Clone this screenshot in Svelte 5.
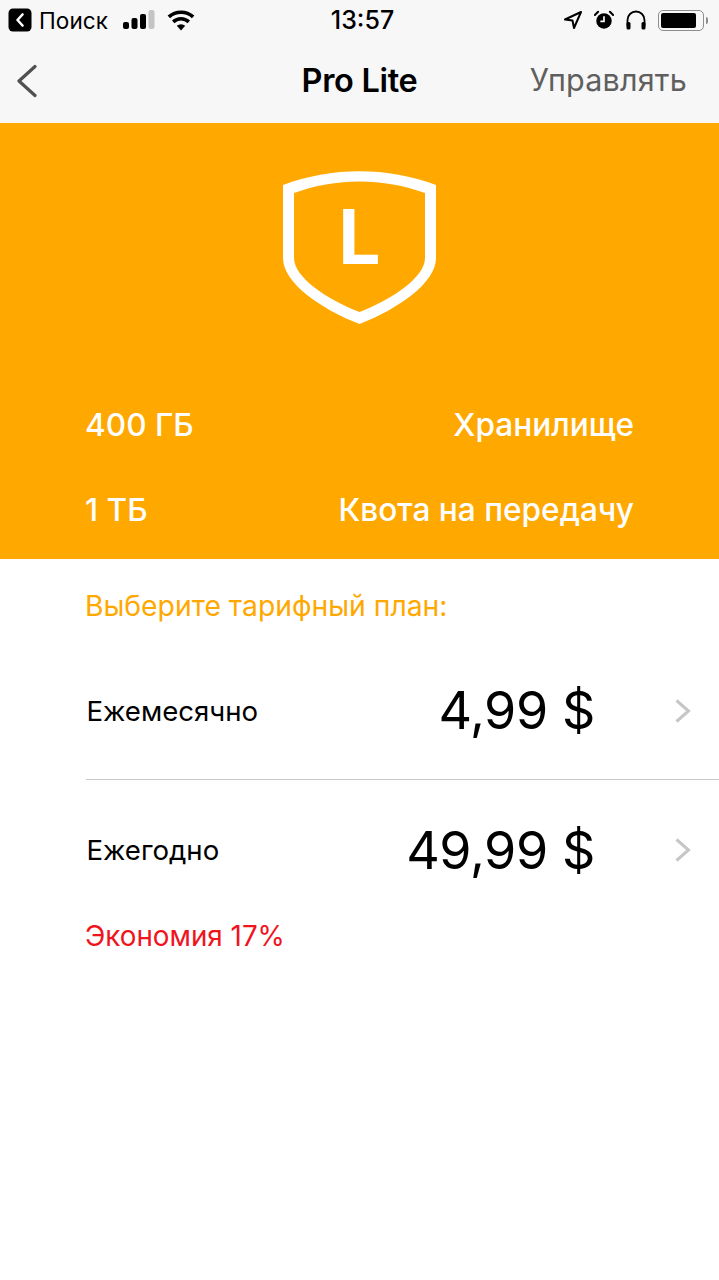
<script>
  const plans = [
    { name: 'Ежемесячно', price: '4,99 $' },
    { name: 'Ежегодно', price: '49,99 $' }
  ];
</script>

<div class="page">
  <header class="top">
    <div class="status">
      <div class="status-left">
        <span class="back-badge">
          <svg width="24" height="24" viewBox="0 0 24 24"><rect width="23" height="23" x="0.5" y="0.5" rx="4.5" fill="#000"/><path d="M14.5 6.5 9.5 12l5 5.5" fill="none" stroke="#fff" stroke-width="2.6" stroke-linecap="round" stroke-linejoin="round"/></svg>
        </span>
        <span class="search">Поиск</span>
        <svg class="signal" width="32" height="20" viewBox="0 0 32 20"><rect x="0" y="12" width="6" height="7" rx="2"/><rect x="8.500" y="8" width="6" height="11" rx="2"/><rect x="17" y="4" width="6" height="15" rx="2"/><rect x="25.500" y="0" width="6" height="19" rx="2" fill="#c4c4c4"/></svg>
        <svg class="wifi" width="28" height="21" viewBox="0 0 28 21"><path d="M14 20.500 9.800 15.800a6.200 6.200 0 0 1 8.400 0z"/><path d="M7.400 13.200 5 10.500a13.200 13.200 0 0 1 18 0l-2.400 2.700a9.700 9.700 0 0 0-13.200 0z"/><path d="M3.100 8.300 0.600 5.600a19.800 19.800 0 0 1 26.800 0l-2.500 2.700a16.200 16.200 0 0 0-21.800 0z"/></svg>
      </div>
      <div class="clock">13:57</div>
      <div class="status-right">
        <svg width="20" height="20" viewBox="0 0 20 20"><path d="M18 2 2 9.500l7.500 1 1.500 7.500z" fill="none" stroke="#000" stroke-width="2" stroke-linejoin="round"/></svg>
        <svg class="alarm" width="20" height="20" viewBox="0 0 22 22"><circle cx="11" cy="12" r="8.500"/><path d="M11 7v5.500H7" fill="none" stroke="#fff" stroke-width="1.800"/><path d="M1 5.500 4.500 2M21 5.500 17.500 2" stroke="#000" stroke-width="2.200" stroke-linecap="round"/></svg>
        <svg class="phones" width="22" height="22" viewBox="0 0 22 22"><path d="M2.500 17v-6a8.500 8.500 0 0 1 17 0v6" fill="none" stroke="#000" stroke-width="1.800"/><rect x="1.500" y="13" width="4" height="7.500" rx="1.500"/><rect x="16.500" y="13" width="4" height="7.500" rx="1.500"/></svg>
        <div class="battery"><div class="cell"></div></div>
        <div class="nub"></div>
      </div>
    </div>
    <nav class="nav">
      <svg class="chev" width="24" height="36" viewBox="0 0 24 36"><path d="M22 4.500 6 19l16 14.500" fill="none" stroke="#505050" stroke-width="3.200" stroke-linecap="round" stroke-linejoin="round"/></svg>
      <h1>Pro Lite</h1>
      <span class="manage">Управлять</span>
    </nav>
  </header>

  <section class="hero">
    <svg class="shield" width="153" height="153" viewBox="0 0 153 153">
      <path fill-rule="evenodd" fill="#fff" d="M0 14C48 -4.500 105 -4.500 153 14V87C153 112 115 138 76.500 153C38 138 0 112 0 87ZM11 22C52 6.500 101 6.500 142 22V87C142 106 110 128 76.500 141C43 128 11 106 11 87Z"/>
    </svg>
    <span class="letter">L</span>
    <div class="row first"><span>400 ГБ</span><span>Хранилище</span></div>
    <div class="row"><span>1 ТБ</span><span>Квота на передачу</span></div>
  </section>

  <main class="body">
    <p class="choose">Выберите тарифный план:</p>
    <ul class="plans">
      {#each plans as plan}
        <li class="plan">
          <span class="name">{plan.name}</span>
          <span class="price">{plan.price}</span>
          <svg class="arrow" width="18" height="26" viewBox="0 0 18 26"><path d="M2.500 2.500 14.500 13 2.500 23.500" fill="none" stroke="#c6c6c6" stroke-width="3"/></svg>
        </li>
      {/each}
    </ul>
    <p class="save">Экономия 17%</p>
  </main>
</div>

<style>
  :global(body) {
    margin: 0;
    background: #fff;
  }
  .page {
    width: 719px;
    height: 1280px;
    overflow: hidden;
    font-family: Inter, "Noto Sans", sans-serif;
    color: #000;
  }
  .top {
    background: #f7f7f7;
    height: 123px;
  }
  .status {
    height: 40px;
    display: grid;
    grid-template-columns: 1fr auto 1fr;
    align-items: center;
  }
  .status-left {
    display: flex;
    align-items: center;
    padding-left: 8px;
  }
  .back-badge {
    display: flex;
    width: 24px;
    height: 24px;
  }
  .search {
    font-size: 22.500px;
    margin-left: 7px;
    letter-spacing: 0.1px;
  }
  .signal {
    margin-left: 15px;
  }
  .wifi {
    margin-left: 12px;
  }
  .clock {
    font-size: 25px;
    font-weight: 500;
    padding-left: 6px;
  }
  .status-right {
    display: flex;
    align-items: center;
    justify-content: flex-end;
    padding-right: 11px;
  }
  .alarm {
    margin-left: 11px;
  }
  .phones {
    margin-left: 11px;
  }
  .battery {
    box-sizing: border-box;
    width: 46px;
    height: 21px;
    margin-left: 11px;
    border: 1.500px solid #8e8e8e;
    border-radius: 5px;
    padding: 2px;
  }
  .cell {
    width: 35px;
    height: 100%;
    background: #000;
    border-radius: 2px;
  }
  .nub {
    width: 2px;
    height: 7px;
    margin-left: 2px;
    background: #8e8e8e;
    border-radius: 0 2px 2px 0;
  }
  .nav {
    height: 83px;
    position: relative;
    display: flex;
    align-items: center;
    justify-content: space-between;
    padding: 0 32px 4px 13px;
    box-sizing: border-box;
  }
  .nav h1 {
    position: absolute;
    left: 0;
    right: 0;
    margin: 2px 0 0;
    text-align: center;
    font-size: 32.500px;
    font-weight: 600;
    letter-spacing: -0.3px;
  }
  .manage {
    font-size: 30.500px;
    color: #5f5f5f;
    letter-spacing: 0.2px;
  }
  .hero {
    position: relative;
    background: #ffa800;
    height: 436px;
    color: #fff;
    display: flex;
    flex-direction: column;
    padding: 0 85px;
    box-sizing: border-box;
    font-size: 31.600px;
    font-weight: 450;
  }
  .shield {
    position: absolute;
    left: 283px;
    top: 48px;
  }
  .letter {
    position: absolute;
    left: 0;
    right: 0;
    top: 69px;
    text-align: center;
    font-size: 75px;
    font-weight: 700;
    line-height: 90px;
  }
  .row {
    display: flex;
    justify-content: space-between;
    height: 36px;
    line-height: 36px;
    margin-bottom: 49px;
  }
  .row.first {
    margin-top: 284px;
  }
  .body {
    padding-top: 29px;
  }
  .choose {
    margin: 0;
    padding-left: 85px;
    color: #ffa800;
    font-size: 28.300px;
    line-height: 36px;
  }
  .plans {
    list-style: none;
    margin: 0;
    padding: 0 0 0 86px;
  }
  .plan {
    display: flex;
    align-items: center;
    position: relative;
    box-sizing: border-box;
  }
  .plan:first-child {
    height: 138px;
    margin-top: 18px;
    border-bottom: 1px solid #c8c8c8;
  }
  .plan:last-child {
    height: 138px;
    padding-top: 2px;
  }
  .name {
    font-size: 27.600px;
    margin-left: 0.5px;
  }
  .price {
    position: absolute;
    right: 124px;
    font-size: 52px;
    letter-spacing: -0.4px;
  }
  .arrow {
    position: absolute;
    right: 27px;
  }
  .save {
    margin: 0;
    padding-left: 85px;
    color: #f0141e;
    font-size: 27.800px;
    line-height: 36px;
  }
</style>
